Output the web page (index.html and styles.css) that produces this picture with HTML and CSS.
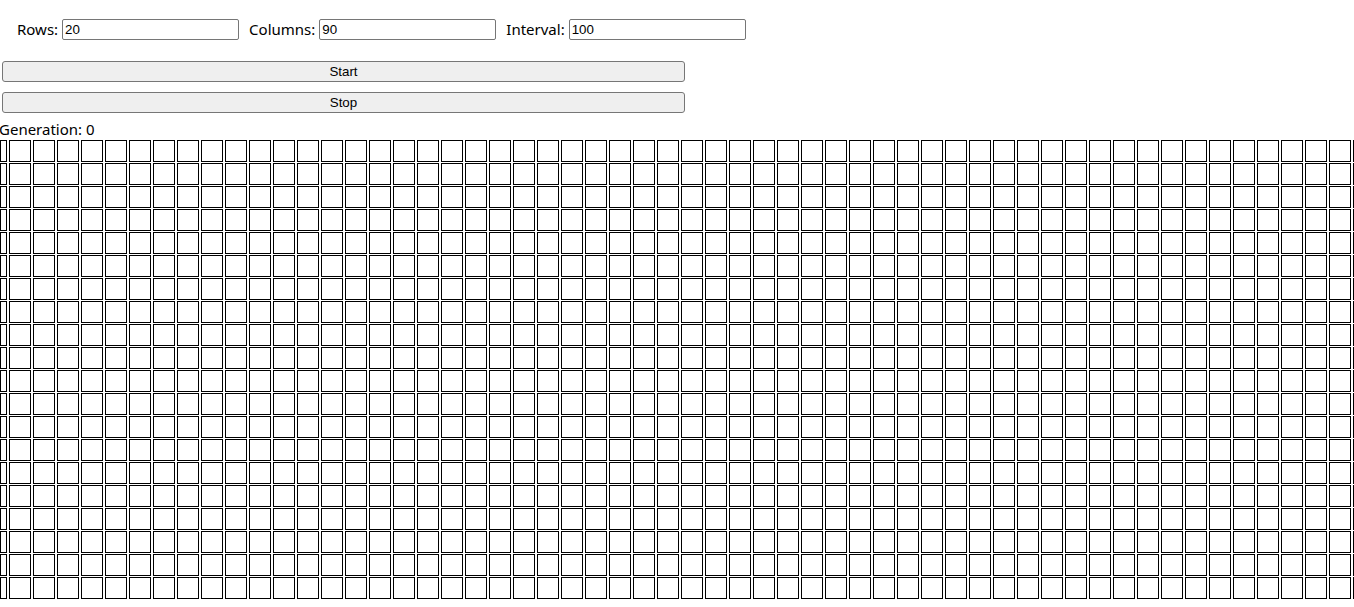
FILE: index.html
```html
<!DOCTYPE html>
<html lang="en">
<head>
<meta charset="utf-8">
<title>Game of Life</title>
<link rel="stylesheet" href="styles.css">
</head>
<body>
<div class="app">
  <div class="controls">
    <label class="field"><span>Rows:</span><input class="num" type="text" value="20"></label>
    <label class="field"><span>Columns:</span><input class="num" type="text" value="90"></label>
    <label class="field"><span>Interval:</span><input class="num" type="text" value="100"></label>
  </div>
  <div class="buttons">
    <button class="btn" type="button">Start</button>
    <button class="btn" type="button">Stop</button>
  </div>
  <div class="generation">Generation: 0</div>
  <div class="grid" id="grid"></div>
</div>
<script src="script.js"></script>
</body>
</html>
```

FILE: styles.css
```css
html, body {
  margin: 0;
  padding: 0;
  background: #fff;
}
body {
  overflow: hidden;
  font-family: "Noto Sans", "Open Sans", sans-serif;
  font-size: 15px;
  color: #000;
}
.app {
  display: flex;
  flex-direction: column;
  align-items: flex-start;
}
.controls {
  display: flex;
  align-items: center;
  gap: 10px;
  padding: 19px 0 0 17px;
}
.field {
  display: flex;
  align-items: center;
  gap: 4px;
  line-height: 21px;
}
.num {
  box-sizing: border-box;
  width: 177px;
  height: 21px;
  margin: 0;
  padding: 1px 2px;
  border: 1px solid #767676;
  border-radius: 2px;
  font-family: "Liberation Sans", Arial, sans-serif;
  font-size: 13.33px;
  color: #000;
  background: #fff;
}
.buttons {
  display: flex;
  flex-direction: column;
  gap: 10px;
  margin: 21px 0 0 2px;
  width: 683px;
}
.btn {
  box-sizing: border-box;
  width: 100%;
  height: 21px;
  margin: 0;
  padding: 0;
  border: 1px solid #767676;
  border-radius: 3px;
  background: #efefef;
  font-family: "Liberation Sans", Arial, sans-serif;
  font-size: 13.33px;
  color: #000;
}
.generation {
  margin: 6px 0 0 -1px;
  line-height: 21px;
  font-size: 15px;
}
.grid {
  display: grid;
  grid-template-columns: 7px repeat(89, 22px);
  grid-auto-rows: 22px;
  column-gap: 2px;
  row-gap: 1px;
}
.cell {
  box-sizing: border-box;
  border: 1px solid #000;
  background: #fff;
}
```

FILE: script.js
```js
const grid = document.getElementById('grid');
const rows = 20;
const cols = 90;
const frag = document.createDocumentFragment();
for (let r = 0; r < rows; r++) {
  for (let c = 0; c < cols; c++) {
    const cell = document.createElement('div');
    cell.className = 'cell';
    frag.appendChild(cell);
  }
}
grid.appendChild(frag);
```
